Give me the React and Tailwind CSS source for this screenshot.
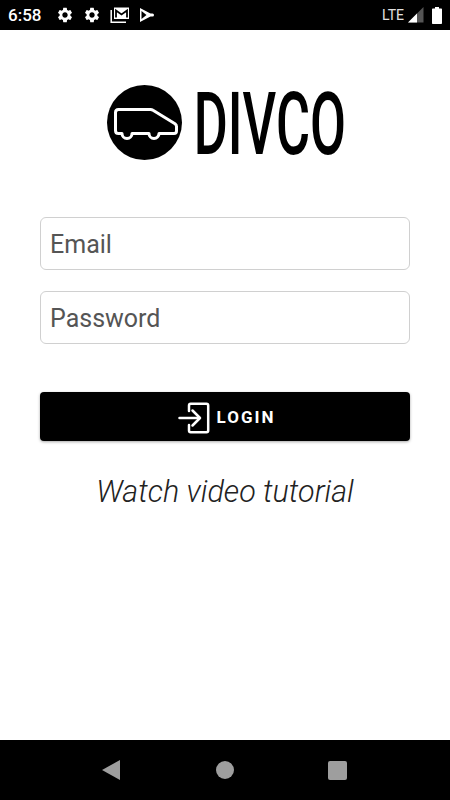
import { MdSettings } from 'react-icons/md';

function MailIcon() {
  return (
    <svg width="20" height="18" viewBox="0 0 20 18" fill="none">
      <path d="M4 1.5H19V13H4Z" fill="#fff" />
      <path d="M6 11.5V4.5L11.5 8.5L17 4.5V11.5" stroke="#000" strokeWidth="1.8" fill="none" />
      <path d="M1.2 4V16.2H16" stroke="#fff" strokeWidth="1.5" fill="none" />
    </svg>
  );
}

function PlayIcon() {
  return (
    <svg width="16" height="16" viewBox="0 0 16 16" fill="none">
      <path d="M1 1L11 6.3C11.6 6.6 12.5 6.5 13.5 6.5A1.5 1.5 0 0 1 13.5 9.5C12.5 9.5 11.6 9.4 11 9.7L1 15Z" fill="#fff" />
      <path d="M2.5 4L7.5 8L2.5 12Z" fill="#000" />
    </svg>
  );
}

function VanLogo() {
  return (
    <svg width="75" height="75" viewBox="0 0 75 75" className="shrink-0">
      <circle cx="37.5" cy="37.5" r="37.5" fill="#000" />
      <path
        d="M11.5 24.5H43.5C44.5 24.5 45.3 24.8 46 25.3L68 38.8C69 39.5 69.5 40.2 69.5 41.4V46C69.5 47.6 68.5 48.5 67 48.5H52A5 5 0 0 1 42 48.5H25A5 5 0 0 1 15 48.5H11.5C9.7 48.5 8.5 47.4 8.5 45.5V27.5C8.5 25.6 9.7 24.5 11.5 24.5Z"
        fill="#000"
        stroke="#fff"
        strokeWidth="3"
        strokeLinejoin="round"
      />
    </svg>
  );
}

function LoginIcon() {
  return (
    <svg width="32" height="32" viewBox="0 0 32 32" fill="none" stroke="#fff" strokeWidth="2.5" strokeLinecap="round" strokeLinejoin="round">
      <path d="M11 9V3.5C11 2.4 11.6 1.8 12.7 1.8H28.5C29.6 1.8 30.2 2.4 30.2 3.5V28.5C30.2 29.6 29.6 30.2 28.5 30.2H12.7C11.6 30.2 11 29.6 11 28.5V23" />
      <path d="M1.5 16H21" />
      <path d="M14.5 8.5L22 16L14.5 23.5" />
    </svg>
  );
}

export default function App() {
  return (
    <div className="w-[450px] h-[800px] flex flex-col bg-white font-['Roboto',sans-serif] overflow-hidden">
      {/* Status bar */}
      <div className="h-[30px] shrink-0 bg-black flex items-center justify-between pl-2 pr-2 text-white">
        <div className="flex items-center">
          <span className="text-[17px] leading-none font-medium w-[48px]">6:58</span>
          <div className="flex items-center gap-[9px]">
            <MdSettings size={18} color="#fff" />
            <MdSettings size={18} color="#fff" />
            <MailIcon />
            <PlayIcon />
          </div>
        </div>
        <div className="flex items-center">
          <span className="text-[14px] leading-none text-[#e0e0e0] mr-[4px]">LTE</span>
          <svg width="16" height="16" viewBox="0 0 16 16" className="mr-[8px]">
            <path d="M0 15.5L15.5 0V15.5Z" fill="#555" />
            <path d="M0 15.5L9 6.5V15.5Z" fill="#fff" />
          </svg>
          <svg width="10" height="17" viewBox="0 0 10 17">
            <path d="M3 0H7V1.5H9C9.6 1.5 10 1.9 10 2.5V16C10 16.6 9.6 17 9 17H1C.4 17 0 16.6 0 16V2.5C0 1.9 .4 1.5 1 1.5H3Z" fill="#fff" />
          </svg>
        </div>
      </div>

      {/* Login form */}
      <div className="flex-1 flex flex-col items-center px-10 pt-[55px]">
        <div className="flex items-center h-[75px] w-[236px]">
          <VanLogo />
          <div className="w-[146px] ml-[15px] h-[75px] pt-[4px] flex items-center justify-center">
            <span className="text-[87px] leading-none font-medium text-black scale-x-[0.6] whitespace-nowrap">DIVCO</span>
          </div>
        </div>

        <input
          placeholder="Email"
          className="mt-[57px] w-full h-[53px] rounded-[6px] border border-[#d0d0d0] px-[9px] pt-[2px] text-[25px] text-[#555] placeholder:text-[#555] outline-none"
        />
        <input
          placeholder="Password"
          className="mt-[21px] w-full h-[53px] rounded-[6px] border border-[#d0d0d0] px-[9px] pt-[2px] text-[25px] text-[#555] placeholder:text-[#555] outline-none"
        />

        <button className="mt-[48px] w-full h-[49px] pt-[2px] pl-[3px] rounded-[4px] bg-black flex items-center justify-center gap-[7px] shadow-[0_1px_3px_rgba(0,0,0,0.35)]">
          <LoginIcon />
          <span className="text-[17px] font-bold text-white tracking-[2px]">LOGIN</span>
        </button>

        <p className="mt-[32px] text-[30.5px] leading-[37px] italic font-light text-[#222]">Watch video tutorial</p>
      </div>

      {/* Nav bar */}
      <div className="h-[60px] shrink-0 bg-black flex items-center pl-[102px]">
        <svg width="18" height="20" viewBox="0 0 18 20">
          <path d="M18 0V20L0 10Z" fill="#9e9e9e" />
        </svg>
        <div className="ml-[96px] w-[18px] h-[18px] rounded-full bg-[#9e9e9e]" />
        <div className="ml-[94px] w-[19px] h-[19px] rounded-[2px] bg-[#9e9e9e]" />
      </div>
    </div>
  );
}
